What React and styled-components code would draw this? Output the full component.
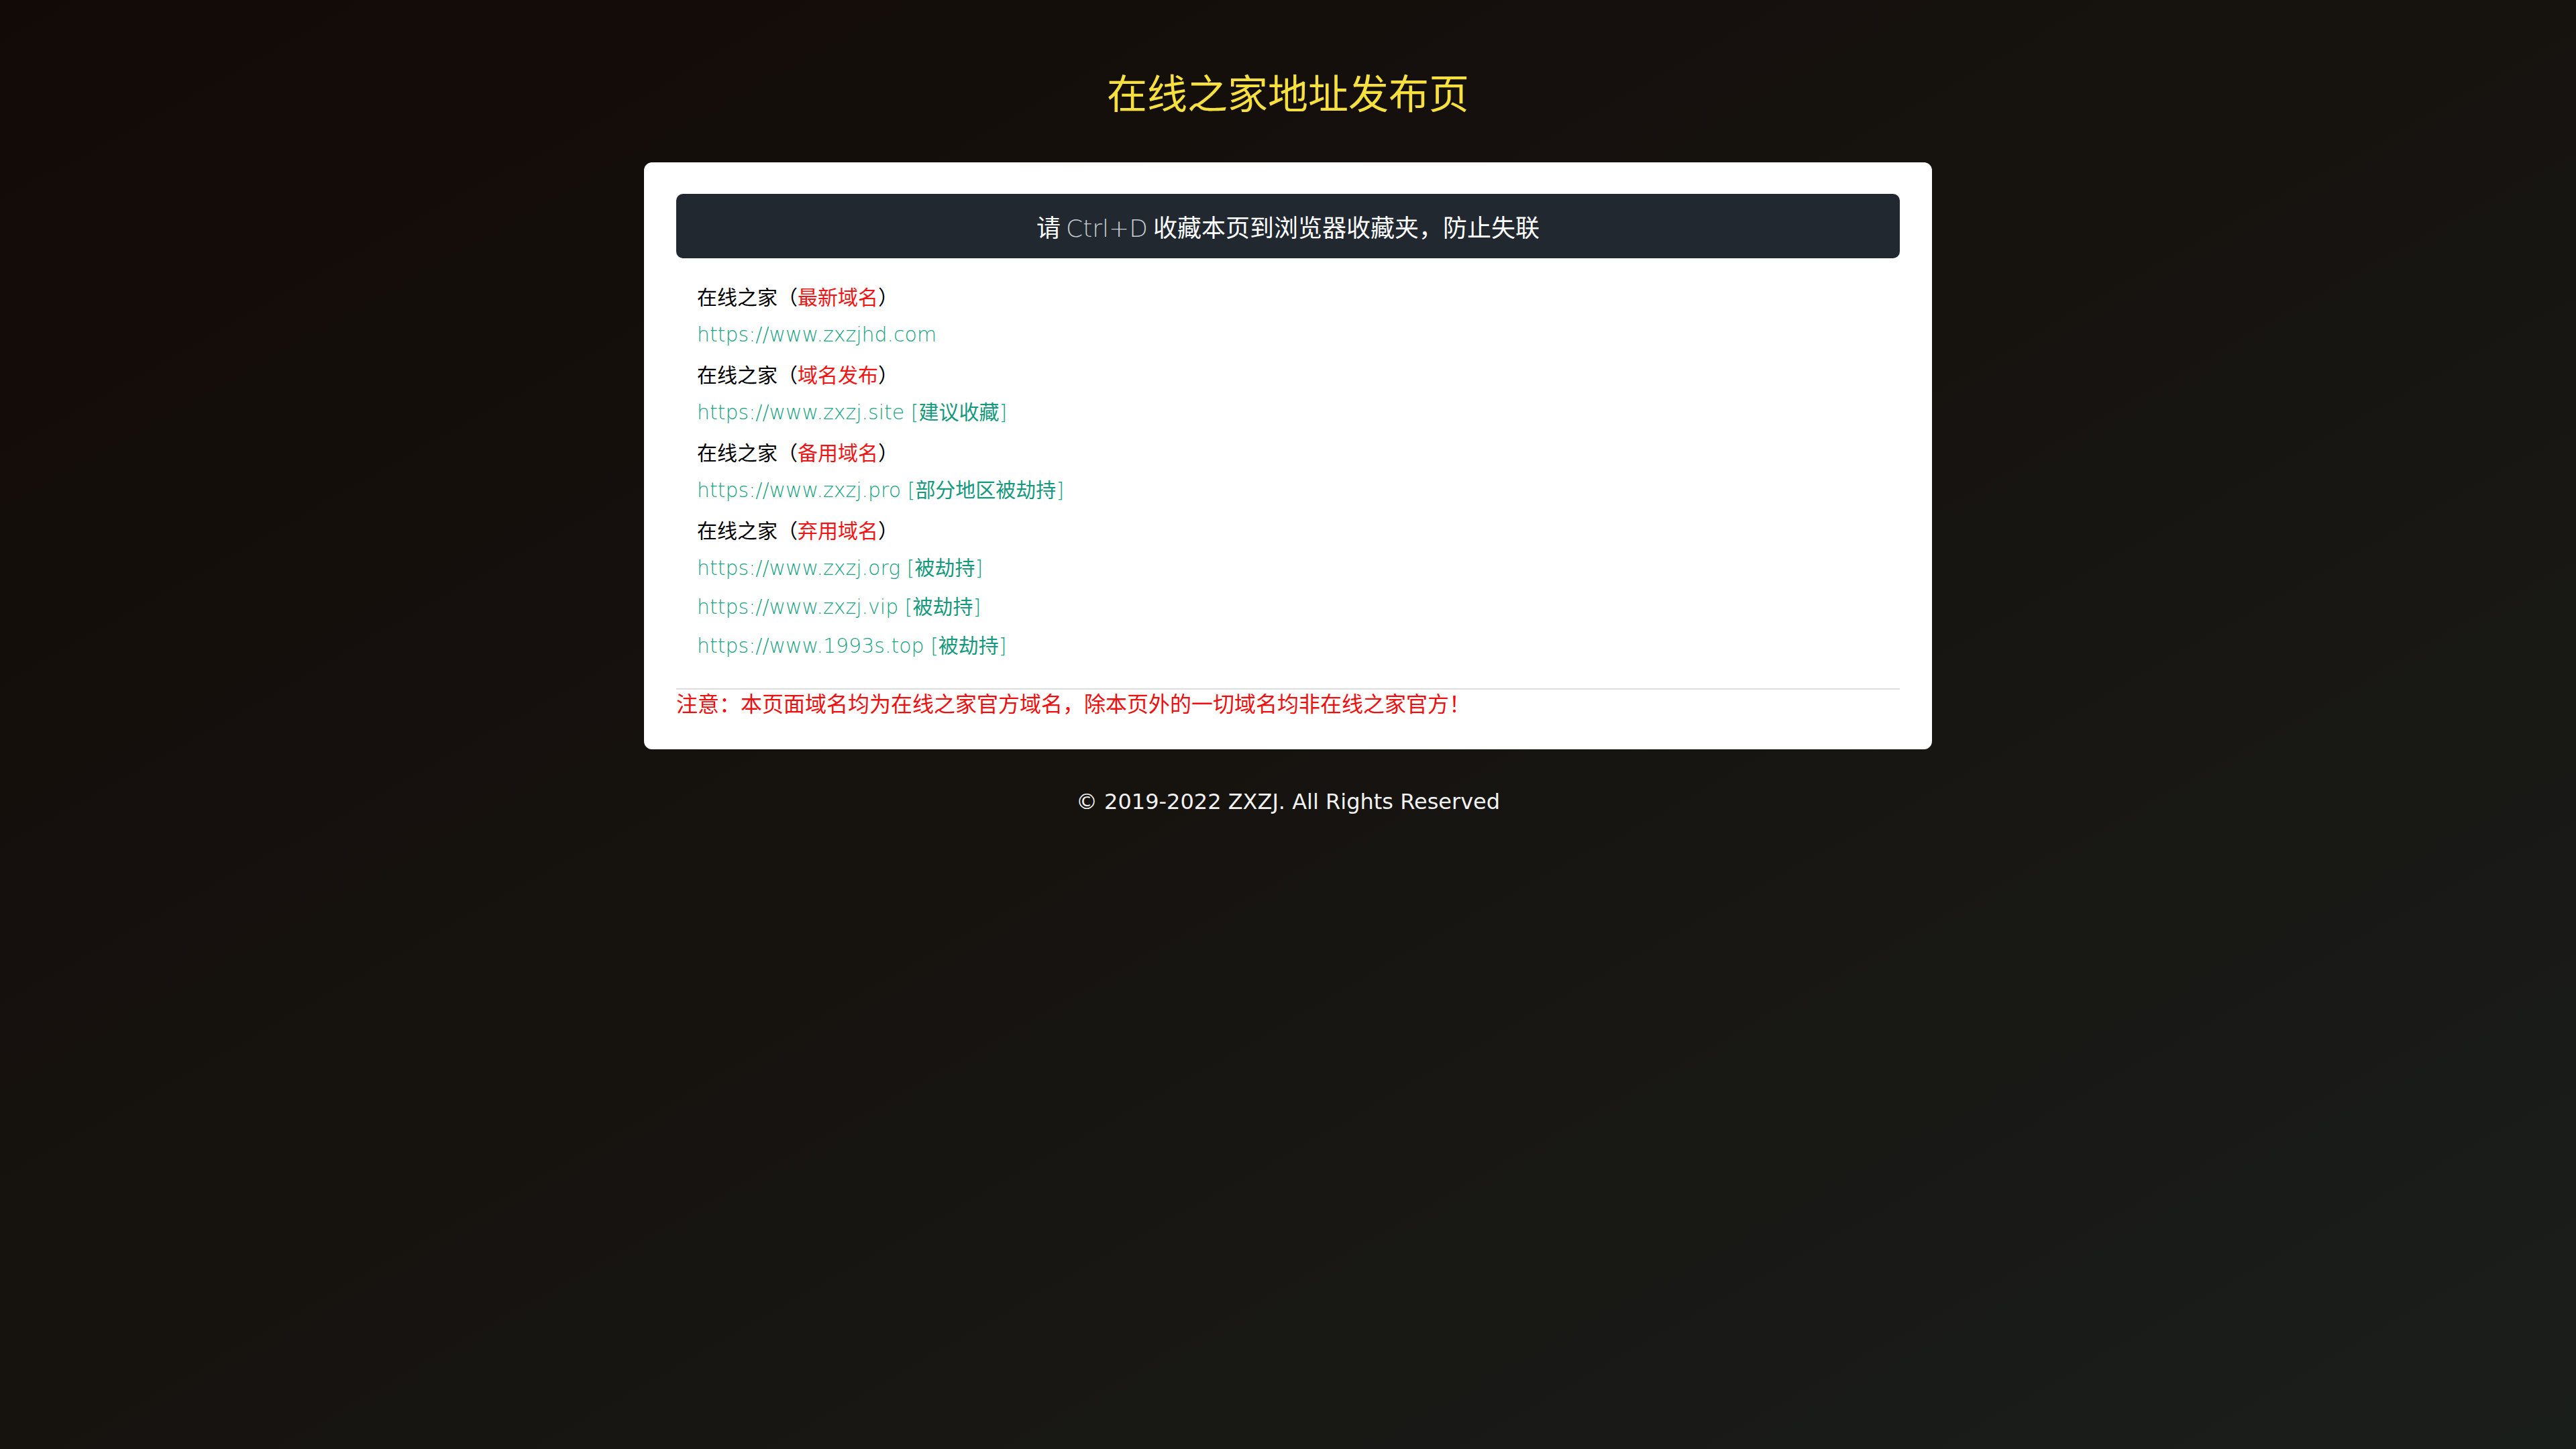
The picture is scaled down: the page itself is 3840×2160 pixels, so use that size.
import styled, { createGlobalStyle } from "styled-components";

const GlobalStyle = createGlobalStyle`
  html, body {
    margin: 0;
    padding: 0;
    min-height: 100%;
  }
  body {
    min-height: 2160px;
    background: linear-gradient(to bottom right, #120a07 0%, #16130f 50%, #1a1e1b 100%);
    font-family: "DejaVu Sans", "Noto Sans CJK SC", sans-serif;
  }
`;

const sites = [
  { tag: "最新域名", links: [{ url: "https://www.zxzjhd.com" }] },
  { tag: "域名发布", links: [{ url: "https://www.zxzj.site", note: "建议收藏" }] },
  { tag: "备用域名", links: [{ url: "https://www.zxzj.pro", note: "部分地区被劫持" }] },
  {
    tag: "弃用域名",
    links: [
      { url: "https://www.zxzj.org", note: "被劫持" },
      { url: "https://www.zxzj.vip", note: "被劫持" },
      { url: "https://www.1993s.top", note: "被劫持" },
    ],
  },
];

export default function App() {
  const rows = [];
  sites.forEach((s, i) => {
    rows.push(
      <Label key={"l" + i}>
        在线之家（<Red>{s.tag}</Red>）
      </Label>
    );
    s.links.forEach((l, j) => {
      rows.push(
        <Link key={"a" + i + j} href={l.url}>
          {l.url}
          {l.note && (
            <>
              {" ["}
              <Note>{l.note}</Note>
              {"]"}
            </>
          )}
        </Link>
      );
    });
  });

  return (
    <Page>
      <GlobalStyle />
      <Title>在线之家地址发布页</Title>
      <Card>
        <Banner>
          <span>
            请 <Key>Ctrl+D</Key> 收藏本页到浏览器收藏夹，防止失联
          </span>
        </Banner>
        <List>{rows}</List>
        <Notice>注意：本页面域名均为在线之家官方域名，除本页外的一切域名均非在线之家官方！</Notice>
      </Card>
      <Footer>© 2019-2022 ZXZJ. All Rights Reserved</Footer>
    </Page>
  );
}

const Page = styled.div`
  display: flex;
  flex-direction: column;
  align-items: center;
  padding-top: 93px;
`;

const Title = styled.h1`
  margin: 0 0 63px;
  font-family: "Noto Sans CJK SC", sans-serif;
  font-weight: 400;
  font-size: 60px;
  line-height: 86px;
  color: #f6e03f;
`;

const Card = styled.div`
  width: 1920px;
  box-sizing: border-box;
  background: #fff;
  border-radius: 12px;
  padding: 47px 48px 51px;
`;

const Banner = styled.div`
  height: 96px;
  background: #212830;
  border-radius: 10px;
  display: flex;
  justify-content: center;
  align-items: center;
  color: #fff;
  font-family: "Noto Sans CJK SC", sans-serif;
  font-size: 36px;
`;

const Key = styled.span`
  font-family: "DejaVu Sans", sans-serif;
  font-weight: 200;
  color: #c9ccd0;
`;

const List = styled.div`
  display: flex;
  flex-direction: column;
  padding: 27px 31px 34px;
  font-size: 30px;
  line-height: 58px;
`;

const Label = styled.div`
  height: 58px;
  color: #000;
  font-family: "Noto Sans CJK SC", sans-serif;
`;

const Red = styled.span`
  color: #f01414;
`;

const Link = styled.a`
  display: block;
  height: 58px;
  color: #1aa385;
  text-decoration: none;
  font-family: "DejaVu Sans", "Noto Sans CJK SC", sans-serif;
  font-weight: 200;
`;

const Note = styled.span`
  font-family: "Noto Sans CJK SC", sans-serif;
  font-weight: 400;
  color: #15997c;
  line-height: 1;
`;

const Notice = styled.div`
  border-top: 2px solid #dedede;
  color: #ee0f0f;
  font-family: "Noto Sans CJK SC", sans-serif;
  font-size: 32px;
  line-height: 38px;
`;

const Footer = styled.div`
  margin-top: 59px;
  color: #f2f2f2;
  font-family: "DejaVu Sans", sans-serif;
  font-size: 32px;
`;
